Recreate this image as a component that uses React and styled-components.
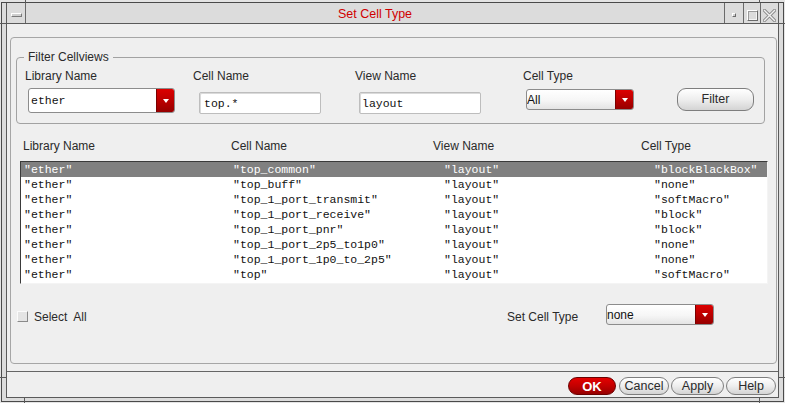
import React from "react";
import styled, { createGlobalStyle } from "styled-components";

const SANS = `"Liberation Sans", Arial, sans-serif`;
const MONO = `"Liberation Mono", "Courier New", monospace`;

const Global = createGlobalStyle`
  html, body { margin: 0; padding: 0; background: #e4e4e4; }
  * { box-sizing: border-box; }
  body { font-family: ${SANS}; font-size: 12px; color: #2a2a2a; }
`;

const Frame = styled.div`
  position: relative;
  width: 785px;
  height: 403px;
  padding: 2px 1px 1px 1px;
  background: #e4e4e4;
`;

const FrameInner = styled.div`
  width: 100%;
  height: 100%;
  border: 1px solid #4a4a4a;
  background: #dcdcdc;
  padding: 0 4px 3px 4px;
  display: flex;
  flex-direction: column;
`;

const Notch = styled.span`
  position: absolute;
  left: ${(p) => p.$x}px;
  top: ${(p) => p.$y}px;
  width: ${(p) => p.$w}px;
  height: ${(p) => p.$h}px;
  background: #5a5a5a;
`;

const TitleBar = styled.div`
  height: 21px;
  display: flex;
  background: #dcdcdc;
  border: 1px solid #5a5a5a;
  border-top: none;
`;

const TitleCell = styled.div`
  width: ${(p) => p.$w}px;
  flex: none;
  display: flex;
  justify-content: center;
  align-items: flex-start;
  padding-top: ${(p) => p.$pt || 0}px;
  border-left: ${(p) => (p.$sep ? "1px solid #6a6a6a" : "none")};
`;

const TitleText = styled.div`
  flex: 1;
  border-left: 1px solid #6a6a6a;
  border-right: 1px solid #6a6a6a;
  display: flex;
  align-items: center;
  justify-content: center;
  color: #d00000;
  font-size: 12.5px;
  padding-top: 1px;
`;

const MenuBar = styled.span`
  width: 11px;
  height: 4px;
  background: #cfcfcf;
  border: 1px solid;
  border-color: #ffffff #7a7a7a #7a7a7a #ffffff;
`;

const MinBox = styled.span`
  width: 4px;
  height: 4px;
  background: #cfcfcf;
  border: 1px solid;
  border-color: #ffffff #6a6a6a #6a6a6a #ffffff;
`;

const MaxBox = styled.span`
  width: 11px;
  height: 11px;
  border: 1px solid;
  border-color: #ffffff #6a6a6a #6a6a6a #ffffff;
  box-shadow: inset 1px 1px 0 #9a9a9a, inset -1px -1px 0 #f4f4f4;
`;

const Client = styled.div`
  flex: 1;
  display: flex;
  flex-direction: column;
  background: #efefef;
  border: 1px solid #5a5a5a;
  border-top: none;
`;

const Panel = styled.div`
  height: 327px;
  margin: 13px 1px 0 3px;
  border: 1px solid #a6a6a6;
  border-radius: 4px;
  display: flex;
  flex-direction: column;
`;

const GroupBox = styled.div`
  position: relative;
  height: 67px;
  margin: 19px 11px 0 5px;
  border: 1px solid #a2a2a2;
  border-radius: 4px;
  padding: 11px 0 0 8px;
  display: flex;
`;

const Legend = styled.span`
  position: absolute;
  left: 7px;
  top: -8px;
  padding: 0 4px;
  line-height: 14px;
  background: #efefef;
  color: #2a2a2a;
`;

const Field = styled.div`
  width: ${(p) => p.$w}px;
  flex: none;
  display: flex;
  flex-direction: column;
  align-items: flex-start;
`;

const Label = styled.div`
  line-height: 14px;
  height: 14px;
  white-space: pre;
  color: #2a2a2a;
`;

const Combo = styled.div`
  display: flex;
  width: ${(p) => p.$w}px;
  height: ${(p) => p.$h}px;
  margin: ${(p) => p.$mt || 0}px 0 0 ${(p) => p.$ml || 0}px;
  border: 1px solid #8c8c8c;
  border-radius: 3px;
  overflow: hidden;
  background: ${(p) =>
    p.$plain ? "#ffffff" : "linear-gradient(#ffffff, #f6f6f6 55%, #e4e4e4)"};
`;

const ComboText = styled.div`
  flex: 1;
  display: flex;
  align-items: center;
  padding-left: ${(p) => p.$pl || 0}px;
  font-family: ${(p) => (p.$mono ? MONO : SANS)};
  font-size: ${(p) => (p.$mono ? "11.5px" : "12px")};
  color: #111;
  white-space: pre;
`;

const ComboArrow = styled.div`
  width: 18px;
  flex: none;
  display: flex;
  align-items: center;
  justify-content: center;
  background: linear-gradient(#dc0000, #b80000 55%, #960000);
  border-left: 1px solid #7a0000;
`;

const Tri = styled.span`
  width: 0;
  height: 0;
  border-left: 3.5px solid transparent;
  border-right: 3.5px solid transparent;
  border-top: 4px solid #ffffff;
  margin-top: 1px;
`;

const Entry = styled.div`
  width: 122px;
  height: 22px;
  margin: ${(p) => p.$mt || 0}px 0 0 ${(p) => p.$ml || 0}px;
  background: #ffffff;
  border: 1px solid #bdbdbd;
  border-radius: 2px;
  box-shadow: inset 1px 1px 0 #dadada;
  display: flex;
  align-items: center;
  padding-left: ${(p) => p.$pl || 0}px;
  font-family: ${MONO};
  font-size: 11.5px;
  color: #111;
  white-space: pre;
`;

const PillButton = styled.button`
  width: ${(p) => p.$w}px;
  height: ${(p) => p.$h}px;
  margin: ${(p) => p.$mt || 0}px ${(p) => p.$mr || 0}px 0 0;
  padding: 0;
  border: 1px solid ${(p) => (p.$primary ? "#6a0000" : "#7e7e7e")};
  border-radius: 9px;
  background: ${(p) =>
    p.$primary
      ? "linear-gradient(#e40000, #c20000 50%, #960000)"
      : "linear-gradient(#ffffff, #eeeeee 50%, #d4d4d4)"};
  color: ${(p) => (p.$primary ? "#ffffff" : "#2a2a2a")};
  font-family: ${SANS};
  font-size: ${(p) => (p.$primary ? "13px" : "12.5px")};
  font-weight: ${(p) => (p.$primary ? 700 : 400)};
  line-height: 1;
  flex: none;
`;

const HeaderRow = styled.div`
  display: grid;
  grid-template-columns: 208px 202px 208px 1fr;
  width: 748px;
  margin: 15px 0 0 9px;
  padding-left: 3px;
  line-height: 14px;
  color: #2a2a2a;
`;

const ListBox = styled.div`
  width: 748px;
  height: 123px;
  margin: 8px 0 0 9px;
  background: #ffffff;
  border-top: 1px solid #3a3a3a;
  border-left: 1px solid #3a3a3a;
  border-right: 1px solid #f4f4f4;
  border-bottom: 1px solid #f4f4f4;
`;

const ListRow = styled.div`
  display: grid;
  grid-template-columns: 209px 211px 210px 1fr;
  height: 15px;
  line-height: 15px;
  padding-left: 3px;
  font-family: ${MONO};
  font-size: 11.5px;
  white-space: pre;
  background: ${(p) => (p.$sel ? "#808080" : "transparent")};
  color: ${(p) => (p.$sel ? "#ffffff" : "#111111")};
`;

const BottomRow = styled.div`
  display: flex;
  align-items: flex-start;
  margin-top: 20px;
  padding-left: 6px;
`;

const Check = styled.span`
  width: 11px;
  height: 11px;
  margin-top: 7px;
  background: #e4e4e4;
  border: 1px solid;
  border-color: #fbfbfb #8a8a8a #8a8a8a #fbfbfb;
`;

const SideLabel = styled(Label)`
  margin: 6px 0 0 ${(p) => p.$ml || 0}px;
  width: ${(p) => (p.$w ? `${p.$w}px` : "auto")};
`;

const RightGroup = styled.div`
  margin-left: auto;
  margin-right: 62px;
  display: flex;
  align-items: flex-start;
`;

const Separator = styled.div`
  height: 1px;
  margin-top: 7px;
  background: #666666;
`;

const ButtonRow = styled.div`
  height: 25px;
  display: flex;
  justify-content: flex-end;
  align-items: flex-start;
  gap: 2px;
  padding: 5px 2px 0 0;
`;

const CloseIcon = () => (
  <svg width="13" height="13" viewBox="0 0 13 13">
    <path d="M1.5 1.5 L11.5 11.5 M11.5 1.5 L1.5 11.5" stroke="#8a8a8a" strokeWidth="3.2" strokeLinecap="square" />
    <path d="M1.5 1.5 L11.5 11.5 M11.5 1.5 L1.5 11.5" stroke="#f2f2f2" strokeWidth="1.4" strokeLinecap="square" />
  </svg>
);

const ComboBox = ({ w, h, mt, ml, pl, mono, plain, value }) => (
  <Combo $w={w} $h={h} $mt={mt} $ml={ml} $plain={plain}>
    <ComboText $pl={pl} $mono={mono}>{value}</ComboText>
    <ComboArrow>
      <Tri />
    </ComboArrow>
  </Combo>
);

const rows = [
  ["ether", "top_common", "layout", "blockBlackBox"],
  ["ether", "top_buff", "layout", "none"],
  ["ether", "top_1_port_transmit", "layout", "softMacro"],
  ["ether", "top_1_port_receive", "layout", "block"],
  ["ether", "top_1_port_pnr", "layout", "block"],
  ["ether", "top_1_port_2p5_to1p0", "layout", "none"],
  ["ether", "top_1_port_1p0_to_2p5", "layout", "none"],
  ["ether", "top", "layout", "softMacro"],
];

export default function App() {
  return (
    <>
      <Global />
      <Frame>
        <FrameInner>
          <TitleBar>
            <TitleCell $w={18} $pt={10}>
              <MenuBar />
            </TitleCell>
            <TitleText>Set Cell Type</TitleText>
            <TitleCell $w={18} $pt={10}>
              <MinBox />
            </TitleCell>
            <TitleCell $w={17} $pt={7} $sep>
              <MaxBox />
            </TitleCell>
            <TitleCell $w={18} $pt={6} $sep>
              <CloseIcon />
            </TitleCell>
          </TitleBar>
          <Client>
            <Panel>
              <GroupBox>
                <Legend>Filter Cellviews</Legend>
                <Field $w={168}>
                  <Label>Library Name</Label>
                  <ComboBox w={147} h={25} mt={5} ml={3} pl={2} mono plain value="ether" />
                </Field>
                <Field $w={162}>
                  <Label>Cell Name</Label>
                  <Entry $mt={9} $ml={6} $pl={4}>top.*</Entry>
                </Field>
                <Field $w={168}>
                  <Label>View Name</Label>
                  <Entry $mt={9} $ml={4} $pl={2}>layout</Entry>
                </Field>
                <Field $w={154}>
                  <Label>Cell Type</Label>
                  <ComboBox w={108} h={21} mt={6} ml={3} pl={0} value="All" />
                </Field>
                <Field $w={80}>
                  <PillButton $w={77} $h={23} $mt={19}>Filter</PillButton>
                </Field>
              </GroupBox>
              <HeaderRow>
                <span>Library Name</span>
                <span>Cell Name</span>
                <span>View Name</span>
                <span>Cell Type</span>
              </HeaderRow>
              <ListBox>
                {rows.map((r, i) => (
                  <ListRow key={i} $sel={i === 0}>
                    {r.map((c, j) => (
                      <span key={j}>{`"${c}"`}</span>
                    ))}
                  </ListRow>
                ))}
              </ListBox>
              <BottomRow>
                <Check />
                <SideLabel $ml={6}>{"Select  All"}</SideLabel>
                <RightGroup>
                  <SideLabel $w={99}>Set Cell Type</SideLabel>
                  <ComboBox w={108} h={21} mt={0} ml={0} pl={0} value="none" />
                </RightGroup>
              </BottomRow>
            </Panel>
            <Separator />
            <ButtonRow>
              <PillButton $w={48} $h={18} $mr={1} $primary>OK</PillButton>
              <PillButton $w={50} $h={18}>Cancel</PillButton>
              <PillButton $w={53} $h={18}>Apply</PillButton>
              <PillButton $w={50} $h={18}>Help</PillButton>
            </ButtonRow>
          </Client>
        </FrameInner>
        <Notch $x={25} $y={0} $w={1} $h={3} />
        <Notch $x={759} $y={0} $w={1} $h={3} />
        <Notch $x={0} $y={23} $w={6} $h={1} />
        <Notch $x={779} $y={23} $w={6} $h={1} />
        <Notch $x={0} $y={377} $w={6} $h={1} />
        <Notch $x={779} $y={377} $w={6} $h={1} />
        <Notch $x={24} $y={398} $w={1} $h={5} />
        <Notch $x={759} $y={398} $w={1} $h={5} />
      </Frame>
    </>
  );
}
